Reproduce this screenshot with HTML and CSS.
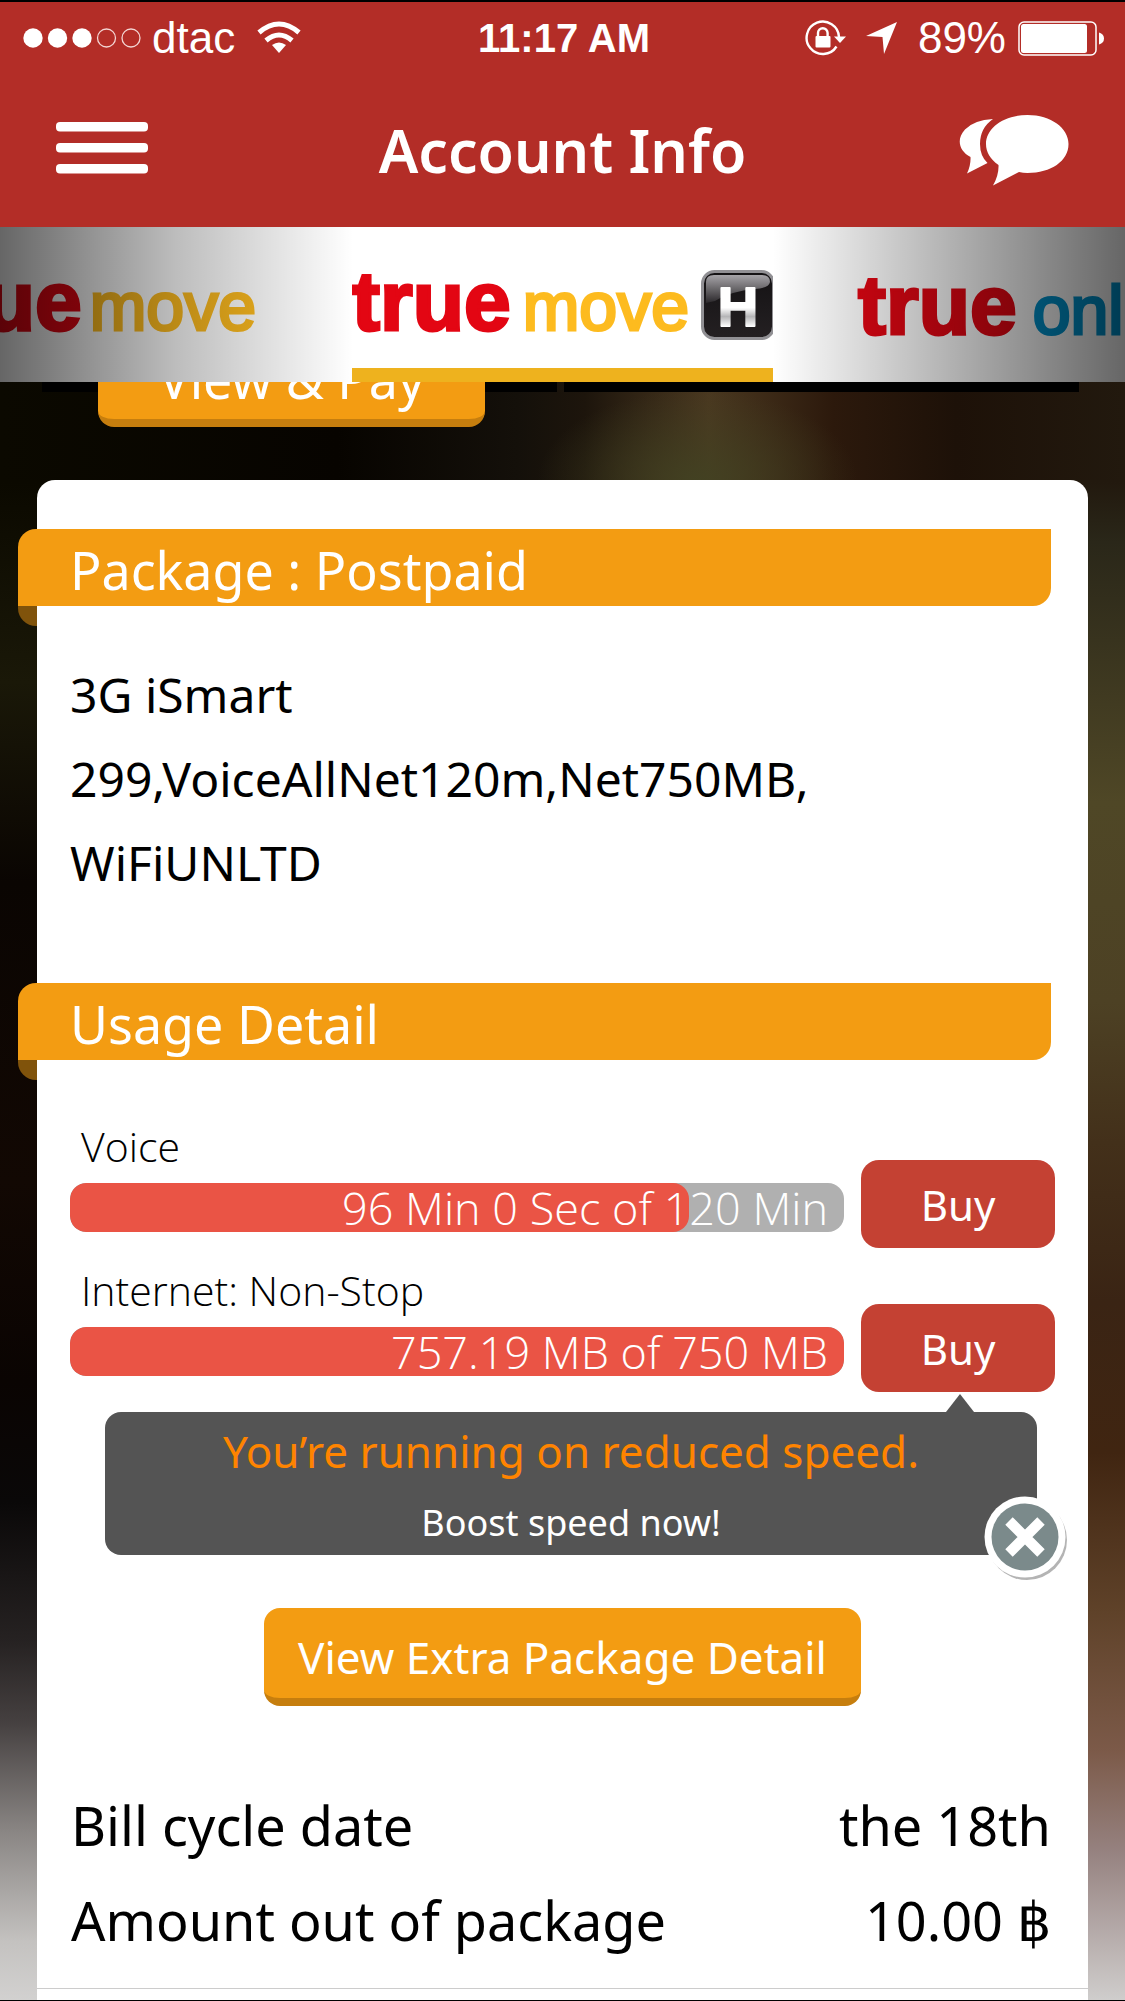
FILE: index.html
```html
<!DOCTYPE html>
<html lang="en">
<head>
<meta charset="utf-8">
<meta name="viewport" content="width=device-width, initial-scale=1">
<title>Account Info</title>
<link rel="stylesheet" href="styles.css">
</head>
<body>
<div class="app">
  <header class="header">
    <div class="status">
      <div class="status-left">
        <svg width="119" height="20" viewBox="0 0 119 20" aria-hidden="true">
          <g fill="#fff"><circle cx="10" cy="10" r="9.7"/><circle cx="34.5" cy="10" r="9.7"/><circle cx="59" cy="10" r="9.7"/></g>
          <g fill="none" stroke="#f3d5d3" stroke-width="1.3"><circle cx="83.5" cy="10" r="9"/><circle cx="108" cy="10" r="9"/></g>
        </svg>
        <span class="carrier">dtac</span>
        <svg class="wifi" width="44" height="35" viewBox="0 0 44 35" aria-hidden="true">
          <g fill="none" stroke="#fff" stroke-width="5"><path d="M2 11.500Q22-5.500 42 11.500"/><path d="M9 19.500Q22 8.500 35 19.500"/></g>
          <path d="M15 24Q22 19 29 24L22 32Z" fill="#fff"/>
        </svg>
      </div>
      <span class="time">11:17 AM</span>
      <div class="status-right">
        <svg width="41" height="38" viewBox="0 0 41 38" aria-hidden="true">
          <path d="M31.500 27.500A16.200 16.200 0 1 1 34 18" fill="none" stroke="#fff" stroke-width="2.400"/>
          <path d="M29 17.500H41L35 24Z" fill="#fff"/>
          <path d="M13 18V14A4.800 4.800 0 0 1 22.600 14V18" fill="none" stroke="#fff" stroke-width="2.400"/>
          <rect x="10.500" y="17" width="15" height="11.500" rx="1" fill="#fff"/>
        </svg>
        <svg class="locate" width="32" height="32" viewBox="0 0 32 32" aria-hidden="true"><path d="M31 0L18 32L16.500 15L0 14Z" fill="#fff"/></svg>
        <span class="carrier">89%</span>
        <svg width="87" height="35" viewBox="0 0 87 35" aria-hidden="true">
          <rect x="1" y="1" width="77" height="33" rx="5" fill="none" stroke="#fff" stroke-width="1.500"/>
          <rect x="3" y="3" width="66" height="29" rx="2.500" fill="#fff"/>
          <path d="M81 11.500Q86 13 86 17.500T81 23.500Z" fill="#fff"/>
        </svg>
      </div>
    </div>
    <div class="titlebar">
      <button class="icon-button" aria-label="Menu">
        <svg width="92" height="56" viewBox="0 0 92 56"><g fill="#fff"><rect width="92" height="9.500" rx="4"/><rect y="21" width="92" height="9.500" rx="4"/><rect y="42" width="92" height="9.500" rx="4"/></g></svg>
      </button>
      <h1>Account Info</h1>
      <button class="icon-button" aria-label="Messages">
        <svg width="110" height="71" viewBox="0 0 110 71"><g fill="#fff"><path d="M34 4Q15 5 6 14.500C-3 24 0 36 11.500 42Q12 50 8 58.500L28.500 48Q21 41 21 29Q21 13 34 4Z"/><path d="M68.500 0C92 0 109.500 13 109.500 29C109.500 46 92 58 68.500 58Q64 58 60 57L34 70.500Q40 60 39.500 50C31 44 27 37 27 29C27 13 45 0 68.500 0Z"/></g></svg>
      </button>
    </div>
  </header>

  <nav class="services" aria-label="Services">
    <button class="service service-prev" aria-label="true move"><span class="logo-true">true</span><span class="logo-name">move</span></button>
    <button class="service service-current" aria-label="true move H"><span class="logo-true">true</span><span class="logo-name">move</span>
      <svg class="logo-h" width="74" height="70" viewBox="0 0 74 70" aria-hidden="true">
        <defs>
          <linearGradient id="edge" x2="0" y2="1"><stop offset="0" stop-color="#141214"/><stop offset="1" stop-color="#242022"/></linearGradient>
          <linearGradient id="gloss" x2="0" y2="1"><stop offset="0" stop-color="#a6a4a8"/><stop offset="1" stop-color="#2b282b"/></linearGradient>
          <linearGradient id="chrome" x2="0" y2="1"><stop offset=".2" stop-color="#fff"/><stop offset=".52" stop-color="#fff"/><stop offset=".66" stop-color="#b5b5b7"/><stop offset=".82" stop-color="#fff"/></linearGradient>
        </defs>
        <rect x="1.500" y="1.500" width="71" height="67" rx="12" fill="url(#edge)" stroke="#919094" stroke-width="3"/>
        <path d="M5 21V12Q5 5 13 5H61Q69 5 69 12Q68 18 54 19Q30 21 14 31L5 33Z" fill="url(#gloss)"/>
        <text x="37" y="56" class="logo-letter" text-anchor="middle" fill="url(#chrome)" stroke="url(#chrome)">H</text>
      </svg>
    </button>
    <button class="service service-next" aria-label="true online"><span class="logo-true">true</span><span class="logo-name logo-online">online</span></button>
  </nav>

  <main>
    <section class="bill" aria-label="Bill">
      <div class="bill-panel"><button class="action bill-action">View &amp; Pay</button></div>
      <div class="bill-panel"></div>
    </section>

    <article class="card">
      <h2 class="ribbon">Package : Postpaid</h2>
      <p class="package">3G iSmart 299,VoiceAllNet120m,Net750MB,<wbr> WiFiUNLTD</p>

      <h2 class="ribbon">Usage Detail</h2>
      <div class="usage">
        <div class="usage-row">
          <div class="usage-main">
            <div class="usage-label">Voice</div>
            <div class="meter"><div class="meter-fill" style="width:80%"></div><span class="meter-text">96 Min 0 Sec of 120 Min</span></div>
          </div>
          <button class="buy">Buy</button>
        </div>
        <div class="usage-row">
          <div class="usage-main">
            <div class="usage-label">Internet: Non-Stop</div>
            <div class="meter"><div class="meter-fill" style="width:100%"></div><span class="meter-text">757.19 MB of 750 MB</span></div>
          </div>
          <button class="buy">Buy</button>
        </div>
      </div>

      <aside class="notice">
        <p class="notice-title">You’re running on reduced speed.</p>
        <p class="notice-text">Boost speed now!</p>
        <button class="notice-close" aria-label="Close">
          <svg width="84" height="84" viewBox="0 0 84 84"><circle cx="43" cy="44" r="40" fill="#777" opacity=".55"/><circle cx="41" cy="41" r="40.500" fill="#fff"/><circle cx="41" cy="41" r="33.500" fill="#7b8a8b"/><path d="M25 25L57 57M57 25L25 57" stroke="#fff" stroke-width="10.500"/></svg>
        </button>
      </aside>

      <button class="action extra">View Extra Package Detail</button>

      <dl class="totals">
        <div><dt>Bill cycle date</dt><dd>the 18th</dd></div>
        <div><dt>Amount out of package</dt><dd>10.00 ฿</dd></div>
      </dl>
    </article>
  </main>
</div>
</body>
</html>
```
FILE: styles.css
```css
* { box-sizing: border-box; }

body {
  margin: 0;
  background: #000;
  color: #000;
  font-family: "Noto Sans", "Open Sans", sans-serif;
}

h1, h2, p, dl, dd { margin: 0; font-weight: 400; }

button {
  padding: 0;
  border: 0;
  background: none;
  color: #fff;
  font-family: inherit;
}

svg { display: block; flex: none; }

.app {
  min-height: 100vh;
  border-top: 2px solid #000;
  border-bottom: 2px solid #000;
}

/* Header */
.header { height: 225px; background: #b32d27; color: #fff; }

.status {
  display: grid;
  grid-template-columns: 1fr auto 1fr;
  align-items: center;
  height: 72px;
  padding: 0 20px 0 23px;
  font-family: "Liberation Sans", Arial, sans-serif;
}
.status-left, .status-right { display: flex; align-items: center; }
.status-left { gap: 10px; }
.status-right { justify-content: flex-end; gap: 14px; }
.wifi { margin-left: 12px; }
.locate { margin: 0 6px; }
.carrier { font-size: 44px; line-height: 72px; }
.status-right .carrier { margin-right: -2px; }
.time { font-size: 40px; font-weight: 700; }

.titlebar {
  display: flex;
  align-items: center;
  justify-content: space-between;
  padding: 36px 56px 0;
}
.titlebar h1 { font-size: 59px; font-weight: 600; line-height: 80px; }
.icon-button { width: 110px; }

/* Service carousel */
.services {
  position: relative;
  display: grid;
  grid-template-columns: minmax(0, 1fr) 421px minmax(0, 1fr);
  height: 155px;
  overflow: hidden;
  background: #fff;
}
.services::before, .services::after {
  content: "";
  position: absolute;
  top: 0;
  bottom: 0;
  width: calc(50% - 210px);
  pointer-events: none;
}
.services::before { left: 0; background: linear-gradient(to right, rgba(0,0,0,.6), rgba(0,0,0,.26) 50%, transparent); }
.services::after { right: 0; background: linear-gradient(to left, rgba(0,0,0,.6), rgba(0,0,0,.3) 50%, transparent); }
.service {
  display: flex;
  align-items: center;
  gap: 12px;
  overflow: hidden;
}
.service-prev { justify-content: flex-end; gap: 8px; padding: 14px 96px 0 0; }
.service-next { gap: 16px; padding: 18px 0 0 85px; }
.service-current { justify-content: space-between; padding-top: 14px; border-bottom: 14px solid #eeb21e; }
.logo-true, .logo-name { align-self: baseline; }
.logo-true {
  color: #e30613;
  font: 700 84px/120px "Liberation Sans", Arial, sans-serif;
  -webkit-text-stroke: 3px #e30613;
}
.logo-name {
  color: #fdbb1f;
  font: 400 68px/120px "Liberation Sans", Arial, sans-serif;
  -webkit-text-stroke: 3px #fdbb1f;
  stroke-linejoin: round;
}
.logo-online { color: #0095d0; -webkit-text-stroke-color: #0095d0; }
.logo-letter {
  font: 700 56px "Liberation Sans", Arial, sans-serif;
  stroke-width: 2px;
  stroke-linejoin: round;
}

/* Page body */
main {
  background:
    linear-gradient(#0b0900 100px, #1a1808 300px, #0a0502 500px, #120803 800px, #0a0402 1000px, #0a0808 1120px, #262222 1260px, #454040 1340px, #8a8684 1450px, #c4c2c0 1560px, #d2d1d0) left / 50% 100% no-repeat,
    linear-gradient(#22190e 100px, #2a2719 160px, #4f4726 420px, #4d4124 620px, #43301a 760px, #3a2414 920px, #402511 1070px, #5f4229 1230px, #7c5a49 1370px, #968280 1470px, #cfcdcc) right / 50% 100% no-repeat;
}

.bill {
  display: grid;
  grid-template-columns: 1fr 1fr;
  gap: 7px;
  height: 98px;
  overflow: hidden;
  padding: 0 46px 0 42px;
  background:
    radial-gradient(160px 90px at 62% 100%, rgba(66, 66, 34, .9), transparent),
    linear-gradient(to right, #0b0900, #070400 30%, #14100a 46%, #1d150c 52%, #4a3820 63%, #2c190c 74%, #1d1108 85%, #22190e);
}
.bill-panel { height: 10px; padding-left: 56px; background: #000; }

.action {
  display: block;
  height: 98px;
  padding-top: 8px;
  border-bottom: 8px solid #c67e0e;
  border-radius: 16px;
  background: #f39c12;
  font-size: 44px;
}
.bill-action { width: 387px; margin-top: -53px; font-size: 52px; }

.card {
  display: flow-root;
  margin: 0 37px;
  padding-bottom: 12px;
  border-radius: 18px 18px 0 0;
  background: linear-gradient(#ccc, #ccc) 0 calc(100% - 11px) / 100% 1px no-repeat #fff;
}

.ribbon {
  position: relative;
  margin: 49px 37px 0 -19px;
  padding: 5px 0 0 52px;
  border-radius: 18px 0 18px 0;
  background: #f39c12;
  color: #fff;
  font-size: 52px;
  line-height: 72px;
}
.ribbon::after {
  content: "";
  position: absolute;
  top: 100%;
  left: 0;
  width: 19px;
  height: 20px;
  border-bottom-left-radius: 18px;
  background: #80530b;
}

.package {
  max-width: 860px;
  margin: 47px 33px 78px;
  font-size: 48px;
  line-height: 84px;
}

.usage {
  display: grid;
  gap: 11px;
  margin: 55px 33px 20px;
}
.usage-row { display: flex; align-items: flex-end; gap: 17px; }
.usage-main { flex: 1; padding-bottom: 16px; font-family: "Open Sans", "Noto Sans", sans-serif; font-weight: 300; }
.usage-label { padding: 0 0 6px 11px; font-size: 41px; line-height: 62px; }
.meter {
  position: relative;
  height: 49px;
  overflow: hidden;
  border-radius: 16px;
  background: #b0b0b0;
  color: #fff;
  font-size: 45px;
  line-height: 50px;
  text-align: right;
}
.meter-fill {
  position: absolute;
  inset: 0 auto 0 0;
  border-radius: 16px;
  background: #ea5445;
}
.meter-text { position: relative; padding-right: 16px; }
.buy {
  width: 194px;
  height: 88px;
  border-radius: 18px;
  background: #c44133;
  font-size: 42px;
}

.notice {
  position: relative;
  margin: 0 51px 0 68px;
  padding-top: 4px;
  border-radius: 16px;
  background: #545454;
  color: #fff;
  text-align: center;
}
.notice::before {
  content: "";
  position: absolute;
  right: 63px;
  bottom: 100%;
  border: solid transparent;
  border-width: 0 14px 18px;
  border-bottom-color: #545454;
}
.notice-title { color: #ff8400; font-size: 44px; line-height: 70px; }
.notice-text { padding-top: 5px; font-size: 36px; line-height: 64px; }
.notice-close { position: absolute; right: -31px; bottom: -25px; }

.extra { width: 597px; margin: 53px auto 0; }

.totals { margin: 72px 37px 0 34px; padding-bottom: 20px; font-size: 54px; line-height: 95px; }
.totals div { display: flex; justify-content: space-between; }
```
